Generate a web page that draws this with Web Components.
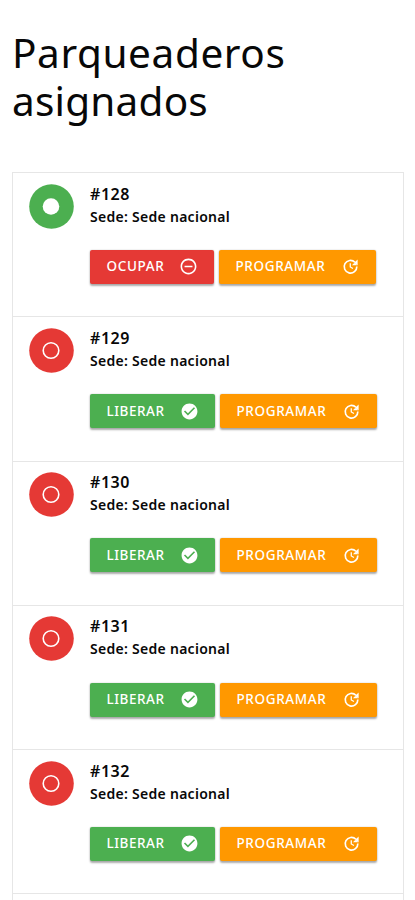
<!DOCTYPE html>
<html lang="es">
<head>
<meta charset="utf-8">
<title>Parqueaderos asignados</title>
<style>
html,body{margin:0;background:#fff;height:900px;overflow:hidden}
body{font-family:"Noto Sans","Open Sans",sans-serif;color:#080808}
</style>
</head>
<body>
<parking-page></parking-page>
<script>
// Text whose tracking is adjusted so that it spans the given width.
class FitText extends HTMLElement{
  connectedCallback(){
    const r=this.attachShadow({mode:'open'});
    r.innerHTML='<style>:host{display:inline-block;white-space:nowrap}</style><span><slot></slot></span>';
    const s=r.querySelector('span'), t=this.textContent.length;
    const w=s.getBoundingClientRect().width, goal=+this.getAttribute('width');
    s.style.letterSpacing=((goal-w)/t)+'px';
    this.style.width=goal+'px';
  }
}
const icons={
  minus:'<path d="M7 11v2h10v-2H7zm5-9C6.48 2 2 6.48 2 12s4.48 10 10 10 10-4.48 10-10S17.52 2 12 2zm0 18c-4.41 0-8-3.59-8-8s3.59-8 8-8 8 3.59 8 8-3.59 8-8 8z"/>',
  check:'<path d="M12 2C6.48 2 2 6.48 2 12s4.48 10 10 10 10-4.48 10-10S17.52 2 12 2zm-2 15l-5-5 1.41-1.41L10 14.17l7.59-7.59L19 8l-9 9z"/>',
  update:'<path d="M21 10.5h-7.2l2.9-3z"/><path d="M21 3v7.5l-4.6-3z"/><path d="M17.6 6.6A8 8 0 1 0 20 12.1" fill="none" stroke="#fff" stroke-width="2.1"/><path d="M11.7 8v4.6l3.4 2" fill="none" stroke="#fff" stroke-width="1.6"/>'
};
class ActionButton extends HTMLElement{
  connectedCallback(){
    this.attachShadow({mode:'open'}).innerHTML=`<style>
    :host{display:flex;box-sizing:border-box;height:34px;align-items:center;justify-content:space-between;padding:0 16px 0 16.5px;border-radius:2px;color:#fff;font-size:13.5px;font-weight:500;line-height:33px;box-shadow:0 1.5px 2px rgba(0,0,0,.32),0 0 2px rgba(0,0,0,.14)}
    :host([tone=red]){background:#e53935}:host([tone=green]){background:#4caf50}:host([tone=orange]){background:#ff9800}
    svg{width:19px;height:19px;fill:#fff}</style>
    <slot></slot><svg viewBox="0 0 24 24">${icons[this.getAttribute('icon')]}</svg>`;
  }
}
class ParkingRow extends HTMLElement{
  connectedCallback(){
    const free=this.hasAttribute('free');
    this.attachShadow({mode:'open'}).innerHTML=`<style>
    :host{display:flex;box-sizing:border-box;height:144.25px;border-bottom:1px solid #e6e6e6;padding:10.5px 0 0 16px;gap:16px}
    .dot{width:45px;height:45px;flex:none}
    .num{display:block;height:22px;line-height:20px;font-size:16px;font-weight:600}
    .sede{display:block;height:23px;line-height:21px;font-size:14px;font-weight:600}
    .acts{display:flex;gap:5px;margin-top:21.3px}
    action-button.a{width:${free?124:125}px}action-button.b{width:157px}
    </style>
    <svg class="dot" viewBox="0 0 45 45"><circle cx="22.5" cy="22.5" r="22.3" fill="${free?'#4caf50':'#e53935'}"/>
    <circle cx="22" cy="22.5" r="${free?8.3:7.8}" fill="${free?'#fff':'none'}" stroke="#fff" stroke-width="${free?0:1.6}"/></svg>
    <div><span class="num"><fit-text width="40">#${this.getAttribute('number')}</fit-text></span>
    <span class="sede"><fit-text width="140">Sede: Sede nacional</fit-text></span>
    <div class="acts"><action-button class="a" tone="${free?'red':'green'}" icon="${free?'minus':'check'}"><fit-text width="58">${free?'OCUPAR':'LIBERAR'}</fit-text></action-button>
    <action-button class="b" tone="orange" icon="update"><fit-text width="90">PROGRAMAR</fit-text></action-button></div></div>`;
  }
}
class ParkingPage extends HTMLElement{
  connectedCallback(){
    this.attachShadow({mode:'open'}).innerHTML=`<style>
    :host{display:block;height:900px;overflow:hidden;padding:29px 11px 0 12px;box-sizing:border-box}
    h1{margin:0;height:143px;font-size:40.5px;line-height:48px;font-weight:400}
    fit-text{display:block}
    .list{border:1px solid #e6e6e6;box-sizing:border-box;height:760px}
    </style>
    <h1><fit-text width="273.5">Parqueaderos</fit-text> <fit-text width="196">asignados</fit-text></h1>
    <div class="list"><parking-row number="128" free></parking-row>${[129,130,131,132].map(n=>`<parking-row number="${n}"></parking-row>`).join('')}</div>`;
  }
}
customElements.define('fit-text',FitText);
customElements.define('action-button',ActionButton);
customElements.define('parking-row',ParkingRow);
customElements.define('parking-page',ParkingPage);
</script>
</body>
</html>
